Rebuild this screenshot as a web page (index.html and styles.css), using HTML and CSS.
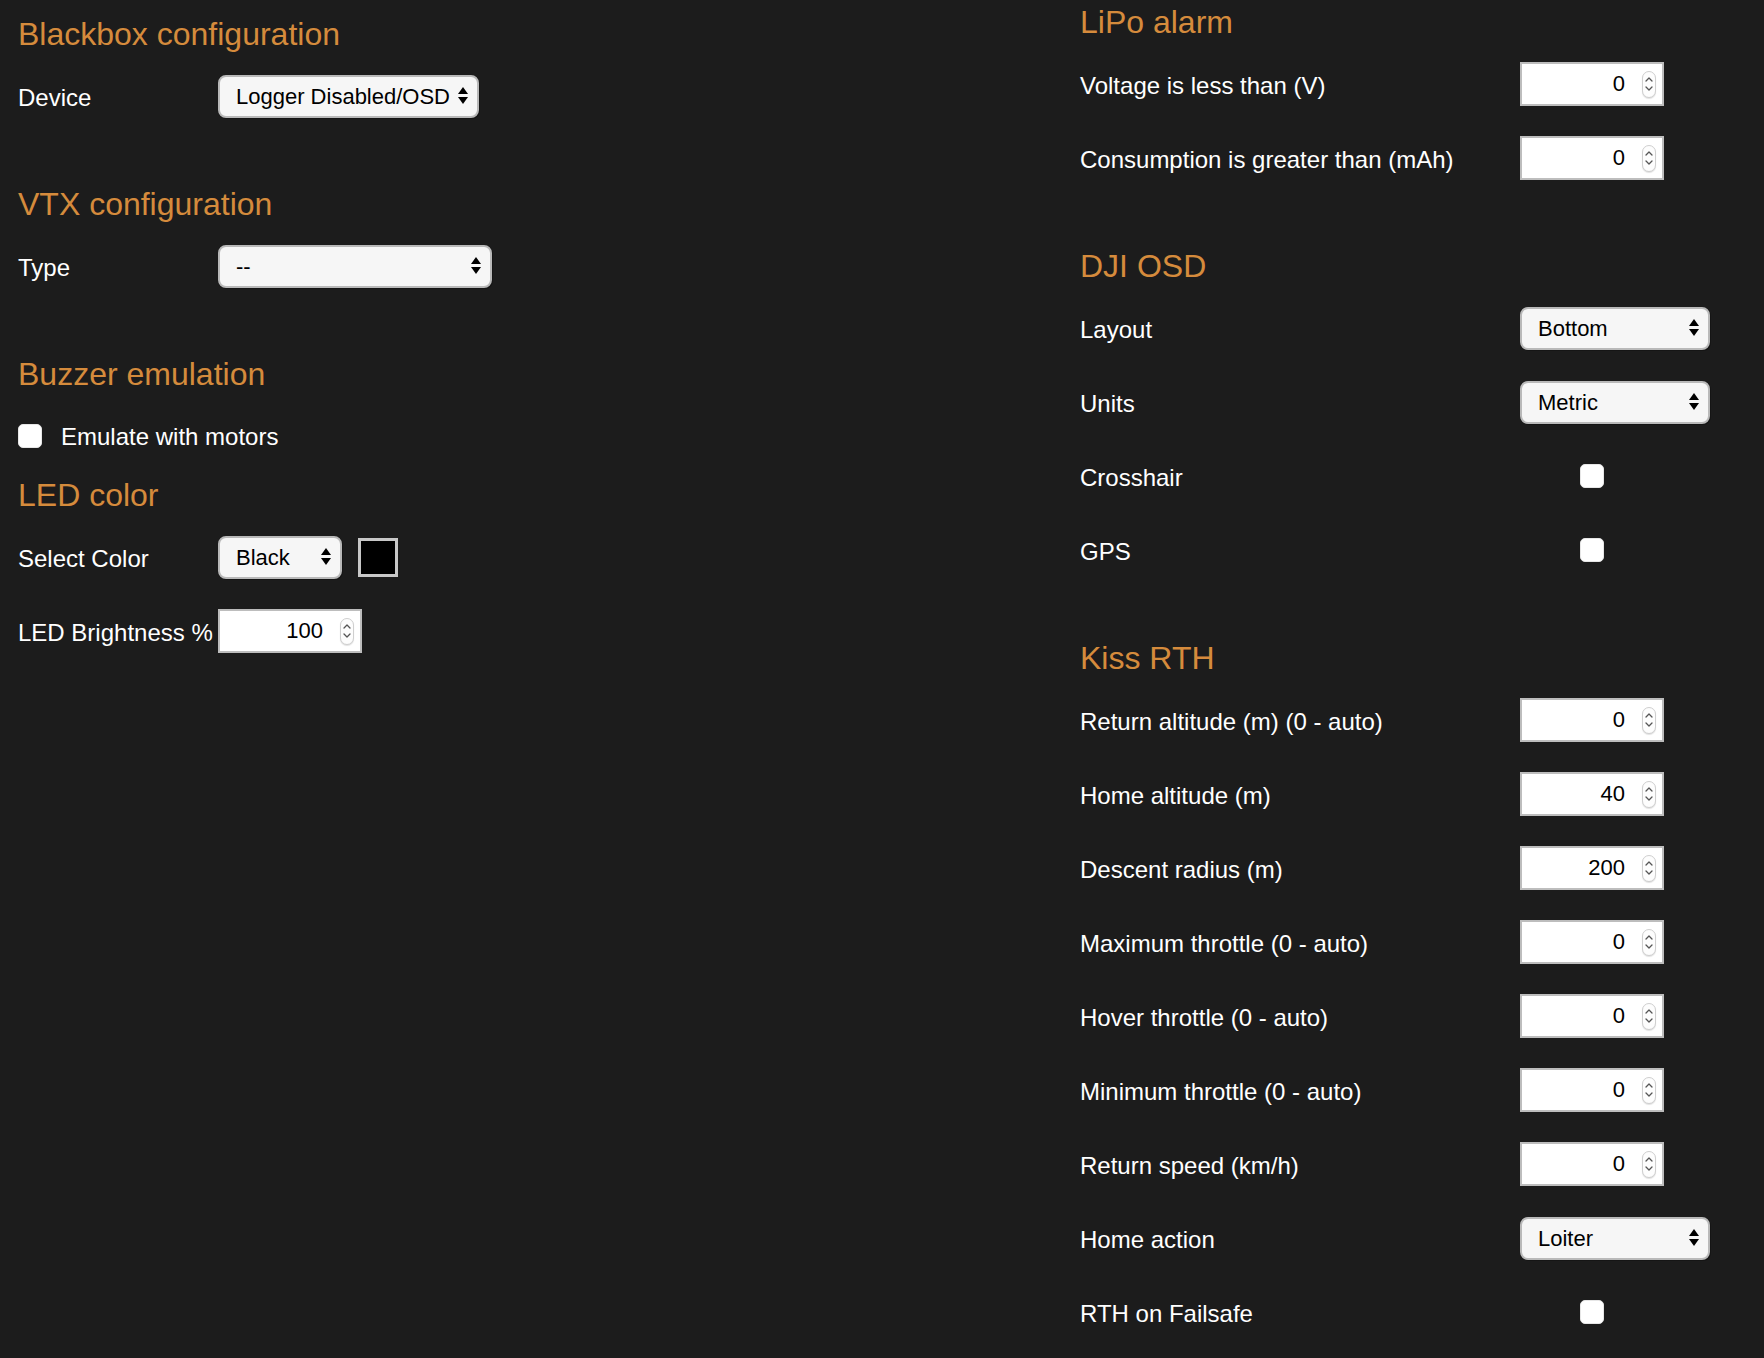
FILE: index.html
```html
<!DOCTYPE html>
<html lang="en">
<head>
<meta charset="utf-8">
<title>Configuration</title>
<link rel="stylesheet" href="styles.css">
</head>
<body>
<div class="page">
  <div class="col col-left">
    <section class="section">
      <h2>Blackbox configuration</h2>
      <div class="row">
        <label class="lbl">Device</label>
        <div class="select w-device"><span class="sel-text">Logger Disabled/OSD</span><svg class="arrows" width="10" height="18" viewBox="0 0 10 18"><polygon points="0,7 5,0 10,7"/><polygon points="0,10 10,10 5,17"/></svg></div>
      </div>
    </section>
    <section class="section">
      <h2>VTX configuration</h2>
      <div class="row">
        <label class="lbl">Type</label>
        <div class="select w-type"><span class="sel-text">--</span><svg class="arrows" width="10" height="18" viewBox="0 0 10 18"><polygon points="0,7 5,0 10,7"/><polygon points="0,10 10,10 5,17"/></svg></div>
      </div>
    </section>
    <section class="section tight">
      <h2>Buzzer emulation</h2>
      <div class="row">
        <input type="checkbox" class="cb cb-inline" id="emu">
        <label class="cb-label" for="emu">Emulate with motors</label>
      </div>
    </section>
    <section class="section">
      <h2>LED color</h2>
      <div class="row">
        <label class="lbl">Select Color</label>
        <div class="select w-color"><span class="sel-text">Black</span><svg class="arrows" width="10" height="18" viewBox="0 0 10 18"><polygon points="0,7 5,0 10,7"/><polygon points="0,10 10,10 5,17"/></svg></div>
        <span class="swatch"></span>
      </div>
      <div class="row">
        <label class="lbl">LED Brightness %</label>
        <div class="numbox"><input class="num" value="100"><span class="spin"><svg width="12" height="24" viewBox="0 0 12 24"><path d="M3 9 L6 6 L9 9"/><path d="M3 15 L6 18 L9 15"/></svg></span></div>
      </div>
    </section>
  </div>

  <div class="col col-right">
    <section class="section">
      <h2>LiPo alarm</h2>
      <div class="row">
        <label class="lbl">Voltage is less than (V)</label>
        <div class="numbox"><input class="num" value="0"><span class="spin"><svg width="12" height="24" viewBox="0 0 12 24"><path d="M3 9 L6 6 L9 9"/><path d="M3 15 L6 18 L9 15"/></svg></span></div>
      </div>
      <div class="row">
        <label class="lbl">Consumption is greater than (mAh)</label>
        <div class="numbox"><input class="num" value="0"><span class="spin"><svg width="12" height="24" viewBox="0 0 12 24"><path d="M3 9 L6 6 L9 9"/><path d="M3 15 L6 18 L9 15"/></svg></span></div>
      </div>
    </section>
    <section class="section">
      <h2>DJI OSD</h2>
      <div class="row">
        <label class="lbl">Layout</label>
        <div class="select w-right"><span class="sel-text">Bottom</span><svg class="arrows" width="10" height="18" viewBox="0 0 10 18"><polygon points="0,7 5,0 10,7"/><polygon points="0,10 10,10 5,17"/></svg></div>
      </div>
      <div class="row">
        <label class="lbl">Units</label>
        <div class="select w-right"><span class="sel-text">Metric</span><svg class="arrows" width="10" height="18" viewBox="0 0 10 18"><polygon points="0,7 5,0 10,7"/><polygon points="0,10 10,10 5,17"/></svg></div>
      </div>
      <div class="row">
        <label class="lbl">Crosshair</label>
        <div class="cb-cell"><input type="checkbox" class="cb"></div>
      </div>
      <div class="row">
        <label class="lbl">GPS</label>
        <div class="cb-cell"><input type="checkbox" class="cb"></div>
      </div>
    </section>
    <section class="section">
      <h2>Kiss RTH</h2>
      <div class="row">
        <label class="lbl">Return altitude (m) (0 - auto)</label>
        <div class="numbox"><input class="num" value="0"><span class="spin"><svg width="12" height="24" viewBox="0 0 12 24"><path d="M3 9 L6 6 L9 9"/><path d="M3 15 L6 18 L9 15"/></svg></span></div>
      </div>
      <div class="row">
        <label class="lbl">Home altitude (m)</label>
        <div class="numbox"><input class="num" value="40"><span class="spin"><svg width="12" height="24" viewBox="0 0 12 24"><path d="M3 9 L6 6 L9 9"/><path d="M3 15 L6 18 L9 15"/></svg></span></div>
      </div>
      <div class="row">
        <label class="lbl">Descent radius (m)</label>
        <div class="numbox"><input class="num" value="200"><span class="spin"><svg width="12" height="24" viewBox="0 0 12 24"><path d="M3 9 L6 6 L9 9"/><path d="M3 15 L6 18 L9 15"/></svg></span></div>
      </div>
      <div class="row">
        <label class="lbl">Maximum throttle (0 - auto)</label>
        <div class="numbox"><input class="num" value="0"><span class="spin"><svg width="12" height="24" viewBox="0 0 12 24"><path d="M3 9 L6 6 L9 9"/><path d="M3 15 L6 18 L9 15"/></svg></span></div>
      </div>
      <div class="row">
        <label class="lbl">Hover throttle (0 - auto)</label>
        <div class="numbox"><input class="num" value="0"><span class="spin"><svg width="12" height="24" viewBox="0 0 12 24"><path d="M3 9 L6 6 L9 9"/><path d="M3 15 L6 18 L9 15"/></svg></span></div>
      </div>
      <div class="row">
        <label class="lbl">Minimum throttle (0 - auto)</label>
        <div class="numbox"><input class="num" value="0"><span class="spin"><svg width="12" height="24" viewBox="0 0 12 24"><path d="M3 9 L6 6 L9 9"/><path d="M3 15 L6 18 L9 15"/></svg></span></div>
      </div>
      <div class="row">
        <label class="lbl">Return speed (km/h)</label>
        <div class="numbox"><input class="num" value="0"><span class="spin"><svg width="12" height="24" viewBox="0 0 12 24"><path d="M3 9 L6 6 L9 9"/><path d="M3 15 L6 18 L9 15"/></svg></span></div>
      </div>
      <div class="row">
        <label class="lbl">Home action</label>
        <div class="select w-right"><span class="sel-text">Loiter</span><svg class="arrows" width="10" height="18" viewBox="0 0 10 18"><polygon points="0,7 5,0 10,7"/><polygon points="0,10 10,10 5,17"/></svg></div>
      </div>
      <div class="row">
        <label class="lbl">RTH on Failsafe</label>
        <div class="cb-cell"><input type="checkbox" class="cb"></div>
      </div>
    </section>
  </div>
</div>
</body>
</html>
```

FILE: styles.css
```css
html, body {
  margin: 0;
  padding: 0;
}

body {
  background: #1c1c1c;
  color: #ffffff;
  font-family: "Liberation Sans", Arial, Helvetica, sans-serif;
  font-size: 24px;
  height: 1358px;
  overflow: hidden;
}

.page {
  display: grid;
  grid-template-columns: 1062px auto;
  padding-left: 18px;
}

.col {
  display: flex;
  flex-direction: column;
}

.col-left {
  padding-top: 14px;
}

.col-right {
  padding-top: 2px;
}

.section {
  display: flow-root;
}

.section + .section {
  margin-top: 36px;
}

.section.tight .row {
  margin-bottom: 0;
}

.section.tight + .section {
  margin-top: 17px;
}

h2 {
  margin: 0 0 20px 0;
  font-size: 32px;
  line-height: 40px;
  font-weight: normal;
  color: #d58b3c;
}

.row {
  display: flex;
  align-items: center;
  height: 44px;
  margin-bottom: 30px;
}

.lbl {
  flex: none;
  padding-top: 4px;
  line-height: 28px;
  white-space: nowrap;
}

.col-left .lbl {
  width: 200px;
}

.col-right .lbl {
  width: 440px;
}

/* select lookalike */
.select {
  box-sizing: border-box;
  height: 43px;
  display: flex;
  align-items: center;
  justify-content: space-between;
  background: #f6f6f6;
  border: 2px solid #b9b9b9;
  border-radius: 8px;
  padding: 0 9px 0 16px;
  color: #000;
  font-size: 22px;
  box-shadow: 1px 1px 0 rgba(0, 0, 0, 0.25);
}

.sel-text {
  line-height: 28px;
  padding-top: 2px;
  white-space: nowrap;
}

.arrows {
  flex: none;
  fill: #000;
}

.w-device { width: 261px; }
.w-type { width: 274px; }
.w-color { width: 124px; }
.w-right { width: 190px; }

.swatch {
  box-sizing: border-box;
  width: 40px;
  height: 39px;
  margin-left: 16px;
  background: #000;
  border: 3px solid #c8c8c8;
}

/* number input */
.numbox {
  box-sizing: border-box;
  width: 144px;
  height: 44px;
  display: flex;
  align-items: center;
  background: #fff;
  border: 2px solid #bdbdbd;
  padding-right: 6px;
}

.num {
  flex: 1;
  min-width: 0;
  border: 0;
  outline: none;
  background: transparent;
  padding: 0;
  margin: 0;
  font-family: inherit;
  font-size: 22px;
  color: #000;
  text-align: right;
}

.spin {
  box-sizing: border-box;
  flex: none;
  width: 14px;
  height: 27px;
  margin-left: 17px;
  display: flex;
  align-items: center;
  justify-content: center;
  border: 1px solid #cfcfcf;
  border-radius: 7px;
  box-shadow: 0 1px 1px rgba(0, 0, 0, 0.12);
  background: #fdfdfd;
}

.spin svg {
  fill: none;
  stroke: #555;
  stroke-width: 1.3;
  stroke-linecap: round;
  stroke-linejoin: round;
}

/* checkbox */
.cb {
  -webkit-appearance: none;
  appearance: none;
  box-sizing: border-box;
  width: 24px;
  height: 24px;
  margin: 0;
  background: #fff;
  border-radius: 5px;
  border: 1px solid #e6e6e6;
}

.cb-inline {
  margin-left: 0;
}

.cb-label {
  margin-left: 19px;
  padding-top: 2px;
  line-height: 28px;
}

.cb-cell {
  width: 144px;
  display: flex;
  justify-content: center;
}
```
